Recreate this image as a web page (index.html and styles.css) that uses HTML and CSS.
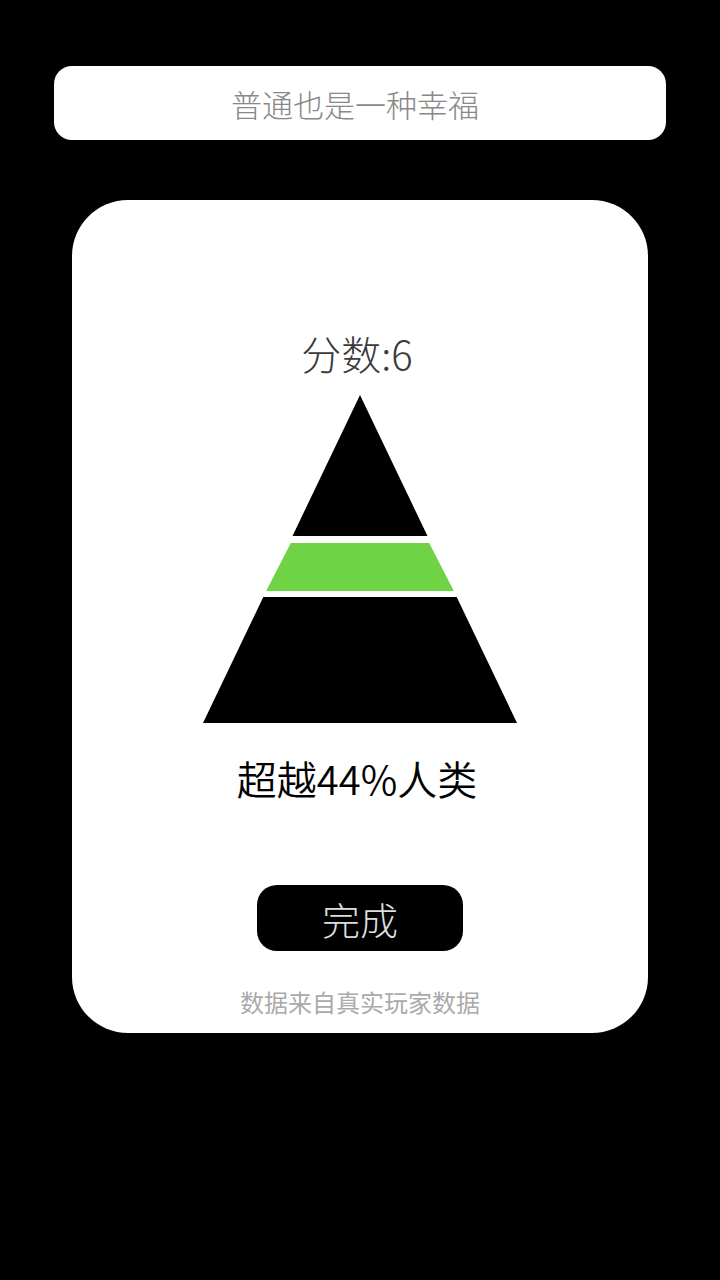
FILE: index.html
```html
<!DOCTYPE html>
<html lang="zh">
<head>
<meta charset="utf-8">
<title>分数</title>
<link rel="stylesheet" href="styles.css">
</head>
<body>
<div class="page">
  <div class="motto"><span class="motto-text">普通也是一种幸福</span></div>
  <div class="card">
    <div class="score">分数:6</div>
    <svg class="pyramid" width="314" height="328" viewBox="0 0 314 328">
      <polygon points="157,0 224.5,141 89.5,141" fill="#000"/>
      <polygon points="87.8,148 226.2,148 250.8,196 63.2,196" fill="#6fd346"/>
      <polygon points="60.3,202 253.7,202 314,328 0,328" fill="#000"/>
    </svg>
    <div class="result">超越44%人类</div>
    <div class="done">完成</div>
    <div class="source">数据来自真实玩家数据</div>
  </div>
</div>
</body>
</html>
```
FILE: styles.css
```css
html, body {
  margin: 0;
  padding: 0;
  background: #000;
}
.page {
  width: 720px;
  height: 1280px;
  display: flex;
  flex-direction: column;
  align-items: flex-start;
  font-family: "Noto Sans CJK SC", "Noto Sans", sans-serif;
}
.motto {
  margin: 66px 0 0 54px;
  width: 612px;
  height: 74px;
  background: #fff;
  border-radius: 18px;
  display: flex;
  align-items: center;
  justify-content: center;
  font-size: 31px;
  font-weight: 300;
  color: #888;
}
.motto-text {
  margin-left: -10px;
}
.card {
  margin: 60px 0 0 72px;
  width: 576px;
  height: 833px;
  box-sizing: border-box;
  background: #fff;
  border-radius: 56px;
  display: flex;
  flex-direction: column;
  align-items: center;
  padding-top: 129px;
}
.score {
  font-size: 40px;
  line-height: 48px;
  color: #3a3a3a;
  font-weight: 300;
  margin-left: -6px;
}
.pyramid {
  display: block;
  margin-top: 18px;
  margin-left: -1px;
}
.result {
  margin-top: 31px;
  font-size: 40px;
  line-height: 48px;
  color: #000;
  font-weight: 350;
  margin-left: -6px;
}
.done {
  margin-top: 83px;
  width: 206px;
  height: 66px;
  background: #000;
  border-radius: 20px;
  display: flex;
  align-items: center;
  justify-content: center;
  color: #ddd;
  font-size: 38px;
  font-weight: 300;
}
.source {
  margin-top: 36px;
  font-size: 24px;
  line-height: 30px;
  color: #aaa;
  font-weight: 400;
}
```
